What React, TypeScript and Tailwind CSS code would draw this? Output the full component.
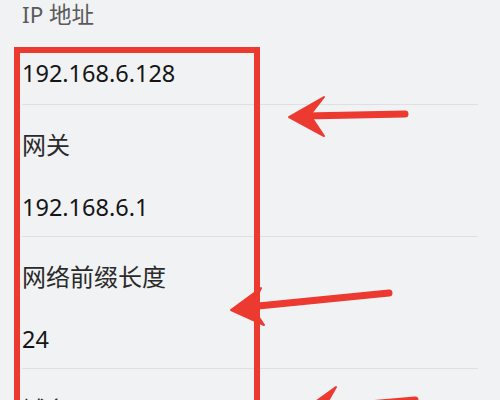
import React from "react";

const font = { fontFamily: '"Noto Sans", "Noto Sans CJK SC", sans-serif' };

function Row({ label, value }: { label: string; value: string }) {
  return (
    <div className="flex flex-col">
      <div className="h-[131px] flex flex-col">
        <div className="mt-[24px] h-[32px] leading-[32px] text-[24px] text-[#2a2a2a]">{label}</div>
        <div className="mt-[30px] h-[32px] leading-[32px] text-[23.5px] text-[#151515]">{value}</div>
      </div>
      <div className="h-px bg-[#dedfe1]" />
    </div>
  );
}

export default function App() {
  return (
    <div className="relative w-[500px] h-[400px] overflow-hidden bg-[#f1f2f4]" style={font}>
      <div className="pl-[22px] pr-[22px] flex flex-col">
        <div className="h-[30px] leading-[30px] text-[22.5px] text-[#5a5a5a]">IP 地址</div>
        <div className="h-[74px] flex items-end pb-[15px]">
          <span className="h-[32px] leading-[32px] text-[23.5px] text-[#151515]">192.168.6.128</span>
        </div>
        <div className="h-px bg-[#dedfe1]" />
        <Row label="网关" value="192.168.6.1" />
        <Row label="网络前缀长度" value="24" />
        <div className="mt-[25px] h-[32px] leading-[32px] text-[24px] text-[#2a2a2a]">域名</div>
      </div>

      <div className="absolute left-[14px] top-[47px] w-[246px] h-[400px] border-[6px] border-[#ec3a30]" />

      <svg className="absolute left-0 top-0" width="500" height="400" viewBox="0 0 500 400">
        <g fill="#ec3a30" stroke="#ec3a30" strokeLinecap="round" strokeLinejoin="round">
          <line x1="305" y1="116" x2="405" y2="114" strokeWidth="7" />
          <polygon points="289,117 324,97 310,115 324,136" strokeWidth="2" />

          <line x1="248" y1="307" x2="389" y2="293" strokeWidth="7" />
          <polygon points="231,310 261,288 252,307 264,325" strokeWidth="2" />

          <line x1="322" y1="408" x2="415" y2="400" strokeWidth="7" />
          <polygon points="300,413 336,387 324,408 338,432" strokeWidth="2" />
        </g>
      </svg>
    </div>
  );
}
